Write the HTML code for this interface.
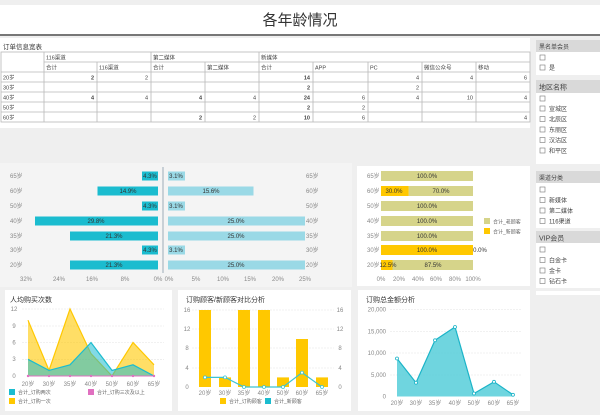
<!DOCTYPE html>
<html><head><meta charset="utf-8"><style>
body{margin:0;width:600px;height:415px;background:#efefef;overflow:hidden;font-family:"Liberation Sans","Noto Sans CJK SC",sans-serif;}
svg{position:absolute;left:0;top:0}
</style></head><body>
<svg width="600" height="415" viewBox="0 0 600 415" font-family="Liberation Sans, Noto Sans CJK SC, sans-serif">
<!-- title -->
<rect x="0" y="5" width="600" height="29" fill="#fff"/>
<text x="300" y="25" font-size="15" text-anchor="middle" fill="#333">各年龄情况</text>
<rect x="0" y="34" width="600" height="2" fill="#777"/>
<!-- table panel -->
<rect x="0" y="38" width="530" height="90" fill="#fff"/>
<text x="3" y="49" font-size="6.5" fill="#333">订单信息宽表</text>
<g stroke="#b8b8b8" stroke-width="0.8" fill="none">
<rect x="1" y="52" width="529" height="70"/>
<line x1="44" y1="62" x2="530" y2="62"/>
<line x1="1" y1="72" x2="530" y2="72"/>
<line x1="1" y1="82" x2="530" y2="82"/>
<line x1="1" y1="92" x2="530" y2="92"/>
<line x1="1" y1="102" x2="530" y2="102"/>
<line x1="1" y1="112" x2="530" y2="112"/>
<line x1="44" y1="52" x2="44" y2="122"/>
<line x1="151" y1="52" x2="151" y2="122"/>
<line x1="259" y1="52" x2="259" y2="122"/>
<line x1="97" y1="62" x2="97" y2="122"/>
<line x1="205" y1="62" x2="205" y2="122"/>
<line x1="313" y1="62" x2="313" y2="122"/>
<line x1="368" y1="62" x2="368" y2="122"/>
<line x1="422" y1="62" x2="422" y2="122"/>
<line x1="476" y1="62" x2="476" y2="122"/>
</g>
<g font-size="5.5" fill="#444">
<text x="46" y="59.5">116渠道</text><text x="153" y="59.5">第二媒体</text><text x="261" y="59.5">新媒体</text>
<text x="46" y="69.5">合计</text><text x="99" y="69.5">116渠道</text><text x="153" y="69.5">合计</text><text x="207" y="69.5">第二媒体</text><text x="261" y="69.5">合计</text><text x="315" y="69.5">APP</text><text x="370" y="69.5">PC</text><text x="424" y="69.5">微信公众号</text><text x="478" y="69.5">移动</text>
<text x="3" y="79.5">20岁</text><text x="3" y="89.5">30岁</text><text x="3" y="99.5">40岁</text><text x="3" y="109.5">50岁</text><text x="3" y="119.5">60岁</text>
</g>
<g font-size="5.5" fill="#444" text-anchor="end">
<text x="94" y="79.5" font-weight="bold">2</text><text x="148" y="79.5">2</text><text x="310" y="79.5" font-weight="bold">14</text><text x="419" y="79.5">4</text><text x="473" y="79.5">4</text><text x="527" y="79.5">6</text>
<text x="310" y="89.5" font-weight="bold">2</text><text x="419" y="89.5">2</text>
<text x="94" y="99.5" font-weight="bold">4</text><text x="148" y="99.5">4</text><text x="202" y="99.5" font-weight="bold">4</text><text x="256" y="99.5">4</text><text x="310" y="99.5" font-weight="bold">24</text><text x="365" y="99.5">6</text><text x="419" y="99.5">4</text><text x="473" y="99.5">10</text><text x="527" y="99.5">4</text>
<text x="310" y="109.5" font-weight="bold">2</text><text x="365" y="109.5">2</text>
<text x="202" y="119.5" font-weight="bold">2</text><text x="256" y="119.5">2</text><text x="310" y="119.5" font-weight="bold">10</text><text x="365" y="119.5">6</text><text x="527" y="119.5">4</text>
</g>

<!-- sidebar -->
<g font-size="6" fill="#444">
<rect x="536" y="40" width="64" height="35" fill="#fff"/>
<rect x="536" y="40" width="64" height="12" fill="#d9d9d9"/>
<text x="539" y="49">黑名单会员</text>
<rect x="540" y="55" width="5" height="5" fill="#fff" stroke="#777" stroke-width="0.6"/>
<rect x="540" y="65" width="5" height="5" fill="#fff" stroke="#777" stroke-width="0.6"/><text x="549" y="70">是</text>

<rect x="536" y="80" width="64" height="84" fill="#fff"/>
<rect x="536" y="80" width="64" height="13" fill="#d9d9d9"/>
<text x="539" y="89.5" font-size="7">地区名称</text>
<rect x="540" y="96" width="5" height="5" fill="#fff" stroke="#777" stroke-width="0.6"/>
<rect x="540" y="106" width="5" height="5" fill="#fff" stroke="#777" stroke-width="0.6"/><text x="549" y="111">宣城区</text>
<rect x="540" y="116.5" width="5" height="5" fill="#fff" stroke="#777" stroke-width="0.6"/><text x="549" y="121.5">北辰区</text>
<rect x="540" y="127" width="5" height="5" fill="#fff" stroke="#777" stroke-width="0.6"/><text x="549" y="132">东丽区</text>
<rect x="540" y="137.5" width="5" height="5" fill="#fff" stroke="#777" stroke-width="0.6"/><text x="549" y="142.5">汉沽区</text>
<rect x="540" y="148" width="5" height="5" fill="#fff" stroke="#777" stroke-width="0.6"/><text x="549" y="153">和平区</text>

<rect x="536" y="171" width="64" height="57" fill="#fff"/>
<rect x="536" y="171" width="64" height="12" fill="#d9d9d9"/>
<text x="539" y="180">渠道分类</text>
<rect x="540" y="187" width="5" height="5" fill="#fff" stroke="#777" stroke-width="0.6"/>
<rect x="540" y="197.5" width="5" height="5" fill="#fff" stroke="#777" stroke-width="0.6"/><text x="549" y="202.5">新媒体</text>
<rect x="540" y="208" width="5" height="5" fill="#fff" stroke="#777" stroke-width="0.6"/><text x="549" y="213">第二媒体</text>
<rect x="540" y="218.5" width="5" height="5" fill="#fff" stroke="#777" stroke-width="0.6"/><text x="549" y="223.5">116渠道</text>

<rect x="536" y="231" width="64" height="57" fill="#fff"/>
<rect x="536" y="231" width="64" height="12" fill="#d9d9d9"/>
<text x="539" y="240.5" font-size="7">VIP会员</text>
<rect x="540" y="247" width="5" height="5" fill="#fff" stroke="#777" stroke-width="0.6"/>
<rect x="540" y="257.5" width="5" height="5" fill="#fff" stroke="#777" stroke-width="0.6"/><text x="549" y="262.5">白金卡</text>
<rect x="540" y="268" width="5" height="5" fill="#fff" stroke="#777" stroke-width="0.6"/><text x="549" y="273">金卡</text>
<rect x="540" y="278.5" width="5" height="5" fill="#fff" stroke="#777" stroke-width="0.6"/><text x="549" y="283.5">钻石卡</text>
<rect x="536" y="291" width="64" height="4" fill="#fff"/>
</g>

<!-- butterfly chart -->
<rect x="0" y="163" width="352" height="124" fill="#f4f4f4"/>
<line x1="163" y1="167" x2="163" y2="273" stroke="#8899aa" stroke-width="0.8"/>
<g fill="#1bbccf">
<rect x="142" y="171.5" width="16" height="9"/>
<rect x="97.5" y="186.5" width="60.5" height="9"/>
<rect x="142" y="201.5" width="16" height="9"/>
<rect x="35" y="216.5" width="123" height="9"/>
<rect x="70" y="231.5" width="88" height="9"/>
<rect x="142" y="245.5" width="16" height="9"/>
<rect x="70" y="260.5" width="88" height="9"/>
</g>
<g fill="#9ad9e6">
<rect x="168" y="171.5" width="17" height="9"/>
<rect x="168" y="186.5" width="85.5" height="9"/>
<rect x="168" y="201.5" width="17" height="9"/>
<rect x="168" y="216.5" width="137" height="9"/>
<rect x="168" y="231.5" width="137" height="9"/>
<rect x="168" y="245.5" width="17" height="9"/>
<rect x="168" y="260.5" width="137" height="9"/>
</g>
<g font-size="6" fill="#333" text-anchor="middle">
<text x="150" y="178">4.3%</text><text x="128" y="193">14.9%</text><text x="150" y="208">4.3%</text><text x="96" y="223">29.8%</text><text x="114" y="238">21.3%</text><text x="150" y="252">4.3%</text><text x="114" y="267">21.3%</text>
<text x="176" y="178">3.1%</text><text x="211" y="193">15.6%</text><text x="176" y="208">3.1%</text><text x="236" y="223">25.0%</text><text x="236" y="238">25.0%</text><text x="176" y="252">3.1%</text><text x="236" y="267">25.0%</text>
</g>
<g font-size="6" fill="#888">
<text x="10" y="178">65岁</text><text x="10" y="193">60岁</text><text x="10" y="208">50岁</text><text x="10" y="223">40岁</text><text x="10" y="238">35岁</text><text x="10" y="252">30岁</text><text x="10" y="267">20岁</text>
<text x="306" y="178">65岁</text><text x="306" y="193">60岁</text><text x="306" y="208">50岁</text><text x="306" y="223">40岁</text><text x="306" y="238">35岁</text><text x="306" y="252">30岁</text><text x="306" y="267">20岁</text>
</g>
<g font-size="6" fill="#888" text-anchor="middle">
<text x="26" y="281">32%</text><text x="59" y="281">24%</text><text x="92" y="281">16%</text><text x="125" y="281">8%</text><text x="158" y="281">0%</text>
<text x="169" y="281">0%</text><text x="196" y="281">5%</text><text x="223" y="281">10%</text><text x="250" y="281">15%</text><text x="278" y="281">20%</text><text x="305" y="281">25%</text>
</g>

<!-- stacked chart -->
<rect x="357" y="166" width="173" height="120" fill="#fff"/>
<g fill="#d6d48a">
<rect x="381" y="171" width="92" height="10"/>
<rect x="408.6" y="186" width="64.4" height="10"/>
<rect x="381" y="201" width="92" height="10"/>
<rect x="381" y="216" width="92" height="10"/>
<rect x="381" y="231" width="92" height="10"/>
<rect x="392.5" y="260" width="80.5" height="10"/>
</g>
<g fill="#ffc800">
<rect x="381" y="186" width="27.6" height="10"/>
<rect x="381" y="245" width="92" height="10"/>
<rect x="381" y="260" width="11.5" height="10"/>
</g>
<g font-size="6" fill="#333" text-anchor="middle">
<text x="427" y="178">100.0%</text><text x="394" y="193">30.0%</text><text x="441" y="193">70.0%</text><text x="427" y="208">100.0%</text><text x="427" y="223">100.0%</text><text x="427" y="238">100.0%</text><text x="427" y="252">100.0%</text><text x="480" y="252">0.0%</text><text x="388" y="267">12.5%</text><text x="433" y="267">87.5%</text>
</g>
<g font-size="6" fill="#888">
<text x="367" y="178">65岁</text><text x="367" y="193">60岁</text><text x="367" y="208">50岁</text><text x="367" y="223">40岁</text><text x="367" y="238">35岁</text><text x="367" y="252">30岁</text><text x="367" y="267">20岁</text>
</g>
<g font-size="6" fill="#888" text-anchor="middle">
<text x="381" y="281">0%</text><text x="399" y="281">20%</text><text x="418" y="281">40%</text><text x="436" y="281">60%</text><text x="455" y="281">80%</text><text x="473" y="281">100%</text>
</g>
<rect x="484" y="218" width="6" height="6" fill="#d6d48a"/><text x="493" y="223.5" font-size="5" fill="#666">合计_老顾客</text>
<rect x="484" y="228" width="6" height="6" fill="#ffc800"/><text x="493" y="233.5" font-size="5" fill="#666">合计_新顾客</text>

<!-- bottom panel 1 -->
<rect x="5" y="290" width="167" height="121" fill="#fff"/>
<text x="10" y="302" font-size="7" fill="#333">人均购买次数</text>
<g stroke="#e4e4e4" stroke-width="0.6" stroke-dasharray="2,1">
<line x1="22" y1="309" x2="164" y2="309"/><line x1="22" y1="326" x2="164" y2="326"/><line x1="22" y1="342.5" x2="164" y2="342.5"/><line x1="22" y1="359.3" x2="164" y2="359.3"/>
</g>
<g font-size="6" fill="#888" text-anchor="middle">
<text x="14" y="311">12</text><text x="14" y="328">9</text><text x="14" y="344.5">6</text><text x="14" y="361">3</text><text x="14" y="378">0</text>
<text x="28" y="386">20岁</text><text x="49" y="386">30岁</text><text x="70" y="386">35岁</text><text x="91" y="386">40岁</text><text x="112" y="386">50岁</text><text x="133" y="386">60岁</text><text x="154" y="386">65岁</text>
</g>
<path d="M28,376 L28,320.2 L49,370.4 L70,309 L91,353.7 L112,376 L133,342.5 L154,364.8 L154,376Z" fill="#ffc800" fill-opacity="0.6"/>
<path d="M28,320.2 L49,370.4 L70,309 L91,353.7 L112,376 L133,342.5 L154,364.8" fill="none" stroke="#ffc800" stroke-width="1.2"/>
<path d="M28,376 L28,359.3 L49,370.4 L70,364.8 L91,342.5 L112,370.4 L133,364.8 L154,376Z" fill="#1bbccf" fill-opacity="0.55"/>
<path d="M28,359.3 L49,370.4 L70,364.8 L91,342.5 L112,370.4 L133,364.8 L154,376" fill="none" stroke="#1bbccf" stroke-width="1.2"/>
<line x1="28" y1="376" x2="154" y2="376" stroke="#e070c0" stroke-width="1"/>
<g fill="#e070c0"><circle cx="28" cy="376" r="1.2"/><circle cx="49" cy="376" r="1.2"/><circle cx="70" cy="376" r="1.2"/><circle cx="91" cy="376" r="1.2"/><circle cx="112" cy="376" r="1.2"/><circle cx="133" cy="376" r="1.2"/><circle cx="154" cy="376" r="1.2"/></g>
<rect x="9" y="389" width="6" height="6" fill="#1bbccf"/><text x="18" y="394" font-size="5" fill="#666">合计_订购两次</text>
<rect x="88" y="389" width="6" height="6" fill="#e070c0"/><text x="97" y="394" font-size="5" fill="#666">合计_订购三次及以上</text>
<rect x="9" y="398" width="6" height="6" fill="#ffc800"/><text x="18" y="403" font-size="5" fill="#666">合计_订购一次</text>

<!-- bottom panel 2 -->
<rect x="178" y="290" width="173" height="121" fill="#fff"/>
<text x="186" y="302" font-size="7" fill="#333">订购顾客/新顾客对比分析</text>
<g stroke="#e4e4e4" stroke-width="0.6" stroke-dasharray="2,1">
<line x1="192" y1="310" x2="334" y2="310"/><line x1="192" y1="329" x2="334" y2="329"/><line x1="192" y1="348" x2="334" y2="348"/><line x1="192" y1="368" x2="334" y2="368"/>
</g>
<g fill="#ffc800">
<rect x="199" y="310" width="12" height="77"/><rect x="219" y="377.4" width="12" height="9.6"/><rect x="238" y="310" width="12" height="77"/><rect x="258" y="310" width="12" height="77"/><rect x="277" y="377.4" width="12" height="9.6"/><rect x="296" y="339" width="12" height="48"/><rect x="316" y="377.4" width="12" height="9.6"/>
</g>
<path d="M205,377.4 L225,377.4 L244,387 L264,387 L283,387 L302,372.6 L322,387" fill="none" stroke="#3cc4d4" stroke-width="1.2"/>
<g fill="#fff" stroke="#3cc4d4" stroke-width="0.8"><circle cx="205" cy="377.4" r="1.5"/><circle cx="225" cy="377.4" r="1.5"/><circle cx="244" cy="387" r="1.5"/><circle cx="264" cy="387" r="1.5"/><circle cx="283" cy="387" r="1.5"/><circle cx="302" cy="372.6" r="1.5"/><circle cx="322" cy="387" r="1.5"/></g>
<g font-size="6" fill="#888" text-anchor="middle">
<text x="187" y="312">16</text><text x="187" y="331">12</text><text x="187" y="350">8</text><text x="187" y="370">4</text><text x="187" y="389">0</text>
<text x="340" y="312">16</text><text x="340" y="331">12</text><text x="340" y="350">8</text><text x="340" y="370">4</text><text x="340" y="389">0</text>
<text x="205" y="395">20岁</text><text x="225" y="395">30岁</text><text x="244" y="395">35岁</text><text x="264" y="395">40岁</text><text x="283" y="395">50岁</text><text x="302" y="395">60岁</text><text x="322" y="395">65岁</text>
</g>
<rect x="220" y="398" width="6" height="6" fill="#ffc800"/><text x="229" y="403" font-size="5" fill="#666">合计_订购顾客</text>
<rect x="265" y="398" width="6" height="6" fill="#1bbccf"/><text x="274" y="403" font-size="5" fill="#666">合计_新顾客</text>

<!-- bottom panel 3 -->
<rect x="358" y="290" width="172" height="121" fill="#fff"/>
<text x="366" y="302" font-size="7" fill="#333">订购总金额分析</text>
<g stroke="#e4e4e4" stroke-width="0.6" stroke-dasharray="2,1">
<line x1="390" y1="309.5" x2="522" y2="309.5"/><line x1="390" y1="331.5" x2="522" y2="331.5"/><line x1="390" y1="353" x2="522" y2="353"/><line x1="390" y1="375" x2="522" y2="375"/>
</g>
<g font-size="6" fill="#888" text-anchor="end">
<text x="386" y="311.5">20,000</text><text x="386" y="333.5">15,000</text><text x="386" y="355">10,000</text><text x="386" y="377">5,000</text><text x="386" y="398.5">0</text>
</g>
<g font-size="6" fill="#888" text-anchor="middle">
<text x="397" y="405">20岁</text><text x="416" y="405">30岁</text><text x="435" y="405">35岁</text><text x="455" y="405">40岁</text><text x="474" y="405">50岁</text><text x="494" y="405">60岁</text><text x="513" y="405">65岁</text>
</g>
<path d="M397,396.5 L397,358.5 L416,382.7 L435,340.3 L455,327 L474,393.5 L494,381.8 L513,394.8 L513,396.5Z" fill="#5fd0dc" fill-opacity="0.9"/>
<path d="M397,358.5 L416,382.7 L435,340.3 L455,327 L474,393.5 L494,381.8 L513,394.8" fill="none" stroke="#1bb4c8" stroke-width="1.2"/>
<g fill="#fff" stroke="#1bb4c8" stroke-width="0.8"><circle cx="397" cy="358.5" r="1.5"/><circle cx="416" cy="382.7" r="1.5"/><circle cx="435" cy="340.3" r="1.5"/><circle cx="455" cy="327" r="1.5"/><circle cx="474" cy="393.5" r="1.5"/><circle cx="494" cy="381.8" r="1.5"/><circle cx="513" cy="394.8" r="1.5"/></g>
</svg>
</body></html>
